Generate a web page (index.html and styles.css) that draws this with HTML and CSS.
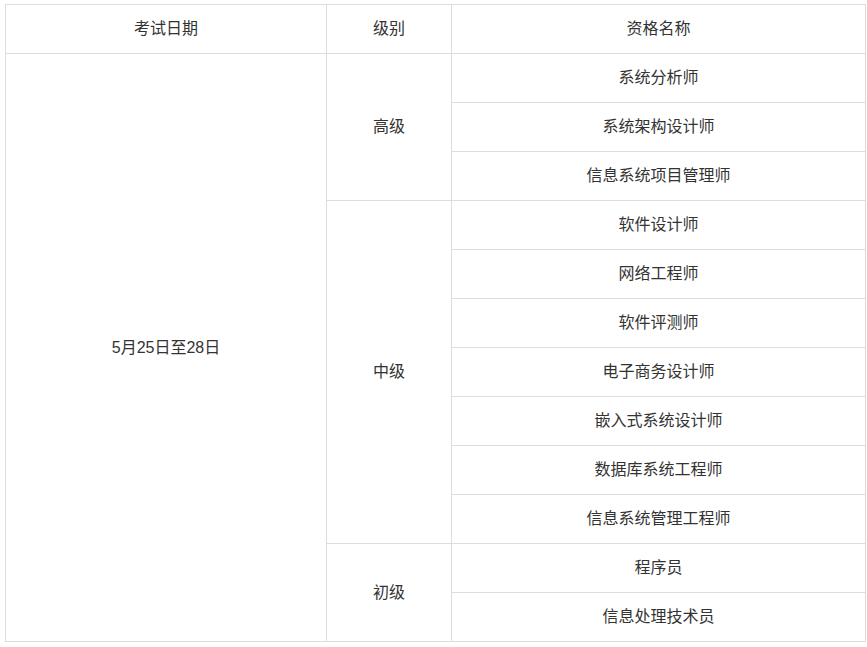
FILE: index.html
```html
<!DOCTYPE html>
<html lang="zh">
<head>
<meta charset="utf-8">
<link rel="stylesheet" href="styles.css">
</head>
<body>
<table class="exam">
  <colgroup>
    <col class="c1">
    <col class="c2">
    <col class="c3">
  </colgroup>
  <thead>
    <tr><th>考试日期</th><th>级别</th><th>资格名称</th></tr>
  </thead>
  <tbody>
    <tr><td rowspan="12">5月25日至28日</td><td rowspan="3">高级</td><td>系统分析师</td></tr>
    <tr><td>系统架构设计师</td></tr>
    <tr><td>信息系统项目管理师</td></tr>
    <tr><td rowspan="7">中级</td><td>软件设计师</td></tr>
    <tr><td>网络工程师</td></tr>
    <tr><td>软件评测师</td></tr>
    <tr><td>电子商务设计师</td></tr>
    <tr><td>嵌入式系统设计师</td></tr>
    <tr><td>数据库系统工程师</td></tr>
    <tr><td>信息系统管理工程师</td></tr>
    <tr><td rowspan="2">初级</td><td>程序员</td></tr>
    <tr><td>信息处理技术员</td></tr>
  </tbody>
</table>
</body>
</html>
```

FILE: styles.css
```css
html, body {
  margin: 0;
  padding: 0;
  background: #fff;
}
body {
  padding: 4px 0 0 5px;
  font-family: "Microsoft YaHei", "Liberation Sans", "Noto Sans CJK SC", sans-serif;
  font-size: 16px;
  color: #333;
}
.exam {
  border-collapse: collapse;
  width: 860px;
  table-layout: fixed;
}
.c1 { width: 321px; }
.c2 { width: 125px; }
.c3 { width: 414px; }
.exam th,
.exam td {
  border: 1px solid #ddd;
  height: 48px;
  padding: 0;
  text-align: center;
  vertical-align: middle;
  font-weight: normal;
  line-height: 20px;
}
```
